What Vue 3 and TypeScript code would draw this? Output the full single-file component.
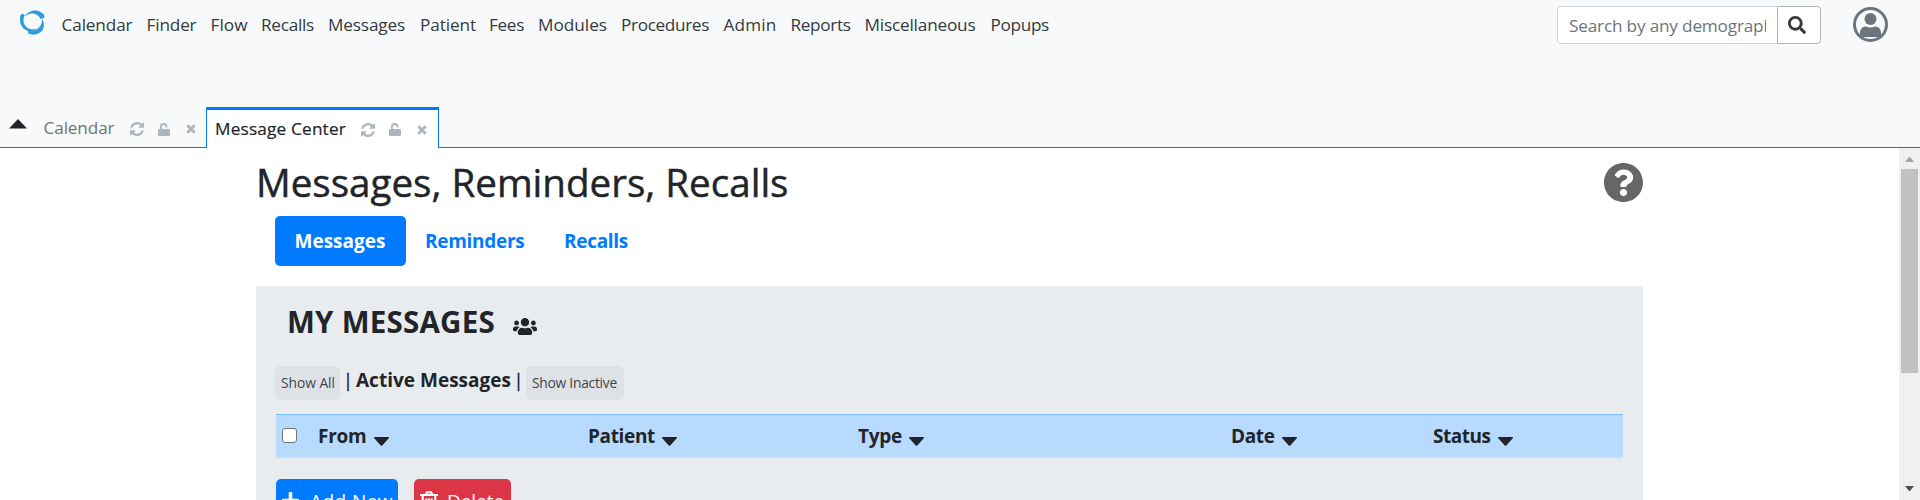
<script setup lang="ts">
import type { Directive } from 'vue'

interface Label {
  text: string
  width: number
}

interface MenuItem extends Label {
  gap: number
}

// Spreads the letter spacing so that a label takes up the given width.
const vFit: Directive<HTMLElement, number> = {
  mounted(el, binding) {
    const natural = el.getBoundingClientRect().width
    const count = (el.textContent ?? '').length
    el.style.letterSpacing = `${(binding.value - natural) / count}px`
  },
}

const menu: MenuItem[] = [
  { text: 'Calendar', width: 71, gap: 14 },
  { text: 'Finder', width: 50, gap: 14 },
  { text: 'Flow', width: 37, gap: 13.5 },
  { text: 'Recalls', width: 53, gap: 14 },
  { text: 'Messages', width: 77, gap: 15 },
  { text: 'Patient', width: 56, gap: 13 },
  { text: 'Fees', width: 35, gap: 14 },
  { text: 'Modules', width: 69, gap: 14 },
  { text: 'Procedures', width: 88, gap: 14.5 },
  { text: 'Admin', width: 53, gap: 14 },
  { text: 'Reports', width: 60, gap: 14 },
  { text: 'Miscellaneous', width: 111, gap: 15 },
  { text: 'Popups', width: 58.5, gap: 0 },
]

const tabs = [
  { text: 'Calendar', width: 71, active: false },
  { text: 'Message Center', width: 131, active: true },
]

const pills = [
  { text: 'Messages', width: 91, active: true },
  { text: 'Reminders', width: 99.5, active: false },
  { text: 'Recalls', width: 64, active: false },
]

const columns: Label[] = [
  { text: 'From', width: 48.5 },
  { text: 'Patient', width: 67 },
  { text: 'Type', width: 44 },
  { text: 'Date', width: 43.5 },
  { text: 'Status', width: 57.5 },
]
</script>

<template>
  <div class="app">
    <header class="topbar">
      <svg class="logo" viewBox="0 0 26 26">
        <path d="M5 7.500C8 1 17-1 22 3c2.500 1 3.500 3 3.500 5.500l-4 1.500C19 4 11 1.500 5 7.500z" />
        <path d="M.5 6c1-1.500 3.500-1.500 4.500-.5-3 6-1 12.500 5 14.500 3 1 6 .5 8-.5-4 4-10 4-14 .5C-.5 16-.5 10 .5 6z" />
        <path d="M9 21.500c4 1.500 8 .5 10.500-2.500 3-3 4-7 3-10 3 4 3.500 10-.5 14-3 3.500-9 4-13 2-1-1-1-2.500 0-3.500z" />
      </svg>
      <nav class="menu">
        <a v-for="m in menu" :key="m.text" :style="{ marginRight: `${m.gap}px` }"><span v-fit="m.width">{{ m.text }}</span></a>
      </nav>
      <div class="search">
        <div class="search-field"><span v-fit="225">Search by any demographics</span></div>
        <button class="search-btn">
          <svg viewBox="0 0 512 512"><path d="M505 442.7L405.3 343c-4.5-4.5-10.6-7-17-7H372c27.6-35.3 44-79.7 44-128C416 93.1 322.9 0 208 0S0 93.1 0 208s93.1 208 208 208c48.3 0 92.7-16.4 128-44v16.3c0 6.4 2.5 12.5 7 17l99.7 99.7c9.4 9.4 24.6 9.4 33.9 0l28.3-28.3c9.4-9.4 9.4-24.6.1-34zM208 336c-70.7 0-128-57.2-128-128 0-70.7 57.2-128 128-128 70.7 0 128 57.2 128 128 0 70.7-57.2 128-128 128z" /></svg>
        </button>
      </div>
      <svg class="user" viewBox="0 0 35 35">
        <circle cx="17.5" cy="17.5" r="16" fill="none" stroke="#6c757d" stroke-width="3" />
        <circle cx="17.5" cy="12" r="6" />
        <path d="M7 28v-2c0-4 2.500-6.500 6-6.500 2.500 1.300 6.500 1.300 9 0 3.500 0 6 2.500 6 6.500v2c-1 1-2 1.800-3 2H10c-1-.2-2-1-3-2z" />
      </svg>
    </header>

    <div class="tabbar">
      <div class="collapse"><svg viewBox="0 0 18 10"><path d="M9 0l9 9.500H0z" /></svg></div>
      <div v-for="t in tabs" :key="t.text" class="tab" :class="{ active: t.active }">
        <div class="tab-label"><span v-fit="t.width">{{ t.text }}</span></div>
        <svg class="refresh" viewBox="0 0 1536 1536"><path d="M1511 928q0 5-1 7-64 268-268 434.500t-478 166.500q-146 0-282.500-55t-243.500-157l-129 129q-19 19-45 19t-45-19-19-45v-448q0-26 19-45t45-19h448q26 0 45 19t19 45-19 45l-137 137q71 66 161 102t187 36q134 0 250-65t186-179q11-17 53-117 8-23 30-23h192q13 0 22.500 9.500t9.500 22.500zm25-800v448q0 26-19 45t-45 19h-448q-26 0-45-19t-19-45 19-45l138-138q-148-137-349-137-134 0-250 65t-186 179q-11 17-53 117-8 23-30 23h-199q-13 0-22.500-9.500t-9.500-22.500v-7q65-268 270-434.500t480-166.500q146 0 284 55.500t245 156.500l130-129q19-19 45-19t45 19 19 45z" /></svg>
        <svg class="lock" viewBox="0 0 12 13"><path d="M1.200 6h.8V3.800a3.700 3.700 0 0 1 7.400 0v.7H7.600v-.7a1.900 1.900 0 0 0-3.800 0V6H11a1 1 0 0 1 1 1v5a1 1 0 0 1-1 1H1a1 1 0 0 1-1-1V7a1 1 0 0 1 1.200-1z" /></svg>
        <svg class="close" viewBox="0 0 10 10"><path d="M1.300 1.300l7.400 7.400M8.700 1.300L1.300 8.700" /></svg>
      </div>
      <div class="tab-rest"></div>
    </div>

    <div class="frame">
      <main class="content">
        <div class="title-row">
          <h1><span v-fit="532.5">Messages, Reminders, Recalls</span></h1>
          <svg class="help" viewBox="8 8 496 496"><path d="M504 256c0 136.997-111.043 248-248 248S8 392.997 8 256C8 119.083 119.043 8 256 8s248 111.083 248 248zM262.655 90c-54.497 0-89.255 22.957-116.549 63.758-3.536 5.286-2.353 12.415 2.715 16.258l34.699 26.310c5.205 3.947 12.621 3.008 16.665-2.122 17.864-22.658 30.113-35.797 57.303-35.797 20.429 0 45.698 13.148 45.698 32.958 0 14.976-12.363 22.667-32.534 33.976C247.128 238.528 216 254.941 216 296v4c0 6.627 5.373 12 12 12h56c6.627 0 12-5.373 12-12v-1.333c0-28.462 83.186-29.647 83.186-106.667 0-58.002-60.165-102-116.531-102zM256 338c-25.365 0-46 20.635-46 46 0 25.364 20.635 46 46 46s46-20.636 46-46c0-25.365-20.635-46-46-46z" /></svg>
        </div>
        <div class="pills">
          <a v-for="p in pills" :key="p.text" class="pill" :class="{ active: p.active }"><span v-fit="p.width">{{ p.text }}</span></a>
        </div>

        <section class="panel">
          <div class="panel-title">
            <h2><span v-fit="208">MY MESSAGES</span></h2>
            <svg class="users" viewBox="0 32 640 448"><path d="M96 224c35.300 0 64-28.700 64-64s-28.700-64-64-64-64 28.700-64 64 28.700 64 64 64zm448 0c35.300 0 64-28.700 64-64s-28.700-64-64-64-64 28.700-64 64 28.700 64 64 64zm32 32h-64c-17.600 0-33.500 7.100-45.100 18.600 40.300 22.100 68.900 62 75.100 109.400h66c17.700 0 32-14.300 32-32v-32c0-35.300-28.700-64-64-64zm-256 0c61.900 0 112-50.100 112-112S381.900 32 320 32 208 82.100 208 144s50.100 112 112 112zm76.800 32h-8.300c-20.800 10-43.900 16-68.500 16s-47.600-6-68.500-16h-8.300C179.600 288 128 339.600 128 403.200V432c0 26.500 21.500 48 48 48h288c26.500 0 48-21.500 48-48v-28.800c0-63.600-51.600-115.200-115.200-115.200zm-223.700-13.400C161.500 263.100 145.600 256 128 256H64c-35.300 0-64 28.700-64 64v32c0 17.700 14.300 32 32 32h65.900c6.300-47.400 34.900-87.300 75.200-109.400z" /></svg>
          </div>
          <div class="filters">
            <button class="chip all"><span v-fit="54">Show All</span></button>
            <span class="bar">|</span>
            <strong><span v-fit="155">Active Messages</span></strong>
            <span class="bar second">|</span>
            <button class="chip inactive"><span v-fit="85">Show Inactive</span></button>
          </div>
          <div class="thead">
            <div><span class="check"></span></div>
            <div v-for="c in columns" :key="c.text" class="th">
              <span v-fit="c.width">{{ c.text }}</span>
              <svg viewBox="0 0 15 9"><path d="M.5 0h14q1 .5 0 1.500L8.500 8.200q-1 1-2 0L.5 1.500Q-.5.5.5 0z" /></svg>
            </div>
          </div>
          <div class="actions">
            <button class="btn add">
              <svg viewBox="0 32 448 448"><path d="M416 208H272V64c0-17.670-14.330-32-32-32h-32c-17.670 0-32 14.330-32 32v144H32c-17.670 0-32 14.330-32 32v32c0 17.670 14.330 32 32 32h144v144c0 17.670 14.330 32 32 32h32c17.670 0 32-14.330 32-32V304h144c17.670 0 32-14.330 32-32v-32c0-17.670-14.330-32-32-32z" /></svg>
              <span v-fit="83">Add New</span>
            </button>
            <button class="btn delete">
              <svg viewBox="0 0 18 20"><path d="M0 4h18M5.500 4l1.500-2.700h4L12.500 4M2.700 4v13.500q0 1.500 1.500 1.500h9.600q1.500 0 1.500-1.500V4M6.300 7.500V16M9 7.500V16M11.700 7.500V16" /></svg>
              <span v-fit="57">Delete</span>
            </button>
          </div>
        </section>
      </main>
      <div class="scrollbar">
        <svg class="up" viewBox="0 0 9 5"><path d="M4 0h1l4 5H0z" /></svg>
        <div class="thumb"></div>
        <svg class="down" viewBox="0 0 9 5"><path d="M0 0h9L5 5H4z" /></svg>
      </div>
    </div>
  </div>
</template>

<style>
html,
body {
  margin: 0;
  overflow: hidden;
}
</style>

<style scoped>
.app {
  width: 1920px;
  height: 500px;
  overflow: hidden;
  display: flex;
  flex-direction: column;
  background: #fff;
  color: #212529;
  font-family: 'Open Sans', 'Noto Sans', sans-serif;
  font-size: 17.2px;
  white-space: nowrap;
}
.app *,
.app {
  box-sizing: border-box;
}
svg {
  display: block;
  flex: none;
  fill: currentColor;
}
button {
  font: inherit;
  border: 0;
  padding: 0;
  text-align: left;
}
.topbar {
  height: 107px;
  flex: none;
  display: flex;
  align-items: flex-start;
  background: #f8f9fa;
}
.logo {
  width: 25px;
  height: 26px;
  margin: 9px 0 0 20px;
  fill: #2d9cdb;
}
.menu {
  display: flex;
  margin-left: 16.5px;
  line-height: 50px;
  color: #343a40;
}
.search {
  display: flex;
  width: 264px;
  height: 38px;
  margin: 6px 0 0 auto;
  border: 1px solid #ced4da;
  border-radius: 4px;
  background: #fff;
}
.search-field {
  width: 210px;
  margin-left: 11px;
  overflow: hidden;
  clip-path: inset(0 12px 0 0);
  line-height: 38px;
  color: #6c757d;
}
.search-btn {
  width: 44px;
  height: 38px;
  margin: -1px -1px 0 -1px;
  border: 1px solid #adb5bd;
  border-radius: 0 4px 4px 0;
  background: #fff;
  color: #343a40;
  display: flex;
  align-items: center;
  padding-left: 10px;
}
.search-btn svg {
  width: 18px;
  height: 18px;
}
.user {
  width: 35px;
  height: 35px;
  margin: 7px 32px 0 32px;
  fill: #6c757d;
}
.tabbar {
  height: 41px;
  flex: none;
  display: flex;
  background: #f8f9fa;
}
.collapse {
  width: 37px;
  border-bottom: 1px solid #007bff;
}
.collapse svg {
  width: 18px;
  height: 10px;
  margin: 11.5px 0 0 9px;
}
.tab {
  display: flex;
  align-items: center;
  width: 169px;
  padding: 1px 0 0 6.5px;
  border-bottom: 1px solid #007bff;
  color: #6c757d;
}
.tab.active {
  width: 233px;
  padding: 0 0 2px 8px;
  border: 1px solid #007bff;
  border-top-width: 3px;
  border-bottom: 0;
  background: #fff;
  color: #212529;
  -webkit-text-stroke: 0.2px #212529;
}
.tab-label {
  width: 86.5px;
}
.tab.active .tab-label {
  width: 146px;
}
.tab svg {
  color: #adb5bd;
  margin-top: 3px;
}
.refresh {
  width: 14px;
  height: 14px;
  margin-right: 14px;
}
.lock {
  width: 12px;
  height: 13px;
  margin-right: 15.5px;
}
.close {
  width: 10px;
  height: 10px;
  stroke: #adb5bd;
  stroke-width: 2.8;
}
.tab-rest {
  flex: 1;
  border-bottom: 1px solid #007bff;
}
.frame {
  flex: 1;
  min-height: 0;
  display: flex;
}
.content {
  width: 1387px;
  margin-left: 256px;
}
.title-row {
  display: flex;
  justify-content: space-between;
  height: 68px;
}
h1 {
  margin: 0;
  font-size: 38.6px;
  font-weight: 400;
  line-height: 69px;
  -webkit-text-stroke: 0.45px #212529;
}
.help {
  width: 39px;
  height: 39px;
  margin-top: 15px;
  color: #666;
}
.pills {
  display: flex;
  padding-left: 19px;
  height: 70px;
}
.pill {
  height: 50px;
  padding: 0 20px 0 19.5px;
  border-radius: 5px;
  font-size: 19px;
  font-weight: 700;
  line-height: 50px;
  color: #007bff;
}
.pill.active {
  background: #007bff;
  color: #fff;
}
.panel {
  height: 300px;
  padding: 0 20px;
  background: #e9ecef;
}
.panel-title {
  display: flex;
  height: 80px;
  padding-left: 11px;
}
h2 {
  margin: 0;
  font-size: 29.5px;
  font-weight: 700;
  line-height: 71px;
}
.users {
  width: 24px;
  height: 17px;
  margin: 32px 0 0 18px;
}
.filters {
  display: flex;
  height: 48px;
  margin-left: -1px;
  font-size: 19px;
  line-height: 29px;
}
.chip {
  height: 34px;
  padding-left: 6px;
  border-radius: 5px;
  background: #dee2e6;
  color: #40464b;
  font-size: 13.8px;
  line-height: 34px;
}
.chip.all {
  width: 65px;
}
.chip.inactive {
  width: 98px;
}
.bar {
  width: 16px;
  text-align: center;
  color: #1c1c5c;
  -webkit-text-stroke: 0.3px #1c1c5c;
}
.bar.second {
  width: 15px;
}
.thead {
  display: grid;
  grid-template-columns: 42px 270px 270px 373px 202px 1fr;
  height: 45px;
  border-top: 1px solid #7abaff;
  border-bottom: 2px solid #dee2e6;
  background: #b8daff;
  font-size: 19px;
  font-weight: 700;
  line-height: 43px;
}
.check {
  display: block;
  width: 15px;
  height: 15px;
  margin: 13px 0 0 6px;
  border: 1px solid #767676;
  border-radius: 3px;
  background: #fff;
}
.th {
  display: flex;
}
.th svg {
  width: 15px;
  height: 9px;
  margin: 22px 0 0 7px;
}
.actions {
  display: flex;
  gap: 16px;
  padding-top: 20px;
}
.btn {
  display: flex;
  height: 44px;
  border-radius: 5px;
  color: #fff;
  font-size: 19px;
  line-height: 45px;
}
.add {
  width: 122px;
  background: #007bff;
}
.delete {
  width: 97px;
  background: #dc3545;
}
.add svg {
  width: 17px;
  height: 17px;
  margin: 13px 11px 0 6px;
}
.delete svg {
  width: 18px;
  height: 20px;
  margin: 12px 9px 0 6px;
  fill: none;
  stroke: #fff;
  stroke-width: 2.1;
}
.scrollbar {
  display: flex;
  flex-direction: column;
  align-items: center;
  width: 21px;
  margin-left: auto;
  background: #f0f0f0;
}
.up {
  width: 9px;
  height: 5px;
  margin: 9px 0 7px;
  color: #a3a3a3;
}
.thumb {
  width: 17px;
  height: 204px;
  background: #c1c1c1;
}
.down {
  width: 9px;
  height: 5px;
  margin: auto 0 9px;
  color: #505050;
}
</style>
